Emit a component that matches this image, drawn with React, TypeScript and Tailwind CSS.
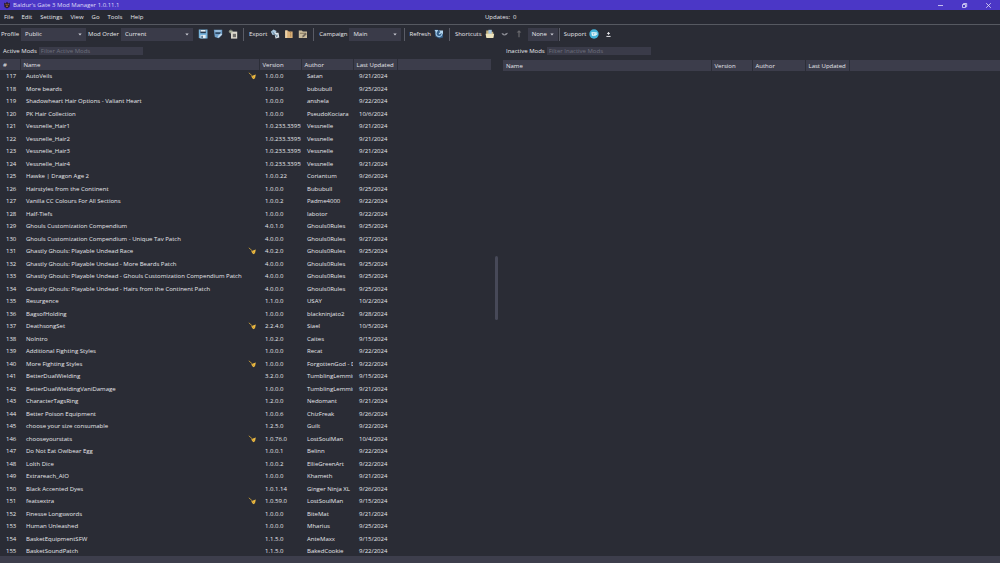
import type { ReactNode } from "react"

type Mod = {
  name:    string
  version: string
  author:  string
  updated: string
  script?: boolean
}

const FIRST_INDEX = 117

const MODS: Mod[] = [
  { name: "AutoVeils", version: "1.0.0.0", author: "Satan", updated: "9/21/2024", script: true },
  { name: "More beards", version: "1.0.0.0", author: "bububull", updated: "9/25/2024" },
  { name: "Shadowheart Hair Options - Valiant Heart", version: "1.0.0.0", author: "anshela", updated: "9/22/2024" },
  { name: "PK Hair Collection", version: "1.0.0.0", author: "PseudoKociara", updated: "10/6/2024" },
  { name: "Vessnelle_Hair1", version: "1.0.233.33959", author: "Vessnelle", updated: "9/21/2024" },
  { name: "Vessnelle_Hair2", version: "1.0.233.33959", author: "Vessnelle", updated: "9/21/2024" },
  { name: "Vessnelle_Hair3", version: "1.0.233.33959", author: "Vessnelle", updated: "9/21/2024" },
  { name: "Vessnelle_Hair4", version: "1.0.233.33959", author: "Vessnelle", updated: "9/21/2024" },
  { name: "Hawke | Dragon Age 2", version: "1.0.0.22", author: "Coriantum", updated: "9/26/2024" },
  { name: "Hairstyles from the Continent", version: "1.0.0.0", author: "Bububull", updated: "9/25/2024" },
  { name: "Vanilla CC Colours For All Sections", version: "1.0.0.2", author: "Padme4000", updated: "9/22/2024" },
  { name: "Half-Tiefs", version: "1.0.0.0", author: "labotor", updated: "9/22/2024" },
  { name: "Ghouls Customization Compendium", version: "4.0.1.0", author: "Ghouls0Rules", updated: "9/25/2024" },
  { name: "Ghouls Customization Compendium - Unique Tav Patch", version: "4.0.0.0", author: "Ghouls0Rules", updated: "9/27/2024" },
  { name: "Ghastly Ghouls: Playable Undead Race", version: "4.0.2.0", author: "Ghouls0Rules", updated: "9/25/2024", script: true },
  { name: "Ghastly Ghouls: Playable Undead - More Beards Patch", version: "4.0.0.0", author: "Ghouls0Rules", updated: "9/25/2024" },
  { name: "Ghastly Ghouls: Playable Undead - Ghouls Customization Compendium Patch", version: "4.0.0.0", author: "Ghouls0Rules", updated: "9/25/2024" },
  { name: "Ghastly Ghouls: Playable Undead - Hairs from the Continent Patch", version: "4.0.0.0", author: "Ghouls0Rules", updated: "9/25/2024" },
  { name: "Resurgence", version: "1.1.0.0", author: "USAY", updated: "10/2/2024" },
  { name: "BagsofHolding", version: "1.0.0.0", author: "blackninjato2", updated: "9/28/2024" },
  { name: "DeathsongSet", version: "2.2.4.0", author: "Siael", updated: "10/5/2024", script: true },
  { name: "NoIntro", version: "1.0.2.0", author: "Caites", updated: "9/15/2024" },
  { name: "Additional Fighting Styles", version: "1.0.0.0", author: "Recat", updated: "9/22/2024" },
  { name: "More Fighting Styles", version: "1.0.0.0", author: "ForgottenGod - D", updated: "9/22/2024", script: true },
  { name: "BetterDualWielding", version: "3.2.0.0", author: "TumblingLemmin", updated: "9/15/2024" },
  { name: "BetterDualWieldingVaniDamage", version: "1.0.0.0", author: "TumblingLemmin", updated: "9/21/2024" },
  { name: "CharacterTagsRing", version: "1.2.0.0", author: "Nedomant", updated: "9/21/2024" },
  { name: "Better Poison Equipment", version: "1.0.0.6", author: "ChizFreak", updated: "9/26/2024" },
  { name: "choose your size consumable", version: "1.2.5.0", author: "Guilt", updated: "9/22/2024" },
  { name: "chooseyourstats", version: "1.0.76.0", author: "LostSoulMan", updated: "10/4/2024", script: true },
  { name: "Do Not Eat Owlbear Egg", version: "1.0.0.1", author: "Belinn", updated: "9/22/2024" },
  { name: "Lolth Dice", version: "1.0.0.2", author: "EllieGreenArt", updated: "9/22/2024" },
  { name: "Extrareach_AIO", version: "1.0.0.0", author: "Khameth", updated: "9/21/2024" },
  { name: "Black Accented Dyes", version: "1.0.1.14", author: "Ginger Ninja XL", updated: "9/26/2024" },
  { name: "featsextra", version: "1.0.59.0", author: "LostSoulMan", updated: "9/15/2024", script: true },
  { name: "Finesse Longswords", version: "1.0.0.0", author: "BiteMat", updated: "9/21/2024" },
  { name: "Human Unleashed", version: "1.0.0.0", author: "Mharius", updated: "9/25/2024" },
  { name: "BasketEquipmentSFW", version: "1.1.5.0", author: "AnteMaxx", updated: "9/15/2024" },
  { name: "BasketSoundPatch", version: "1.1.5.0", author: "BakedCookie", updated: "9/22/2024" },
]

const MENUS = ["File", "Edit", "Settings", "View", "Go", "Tools", "Help"]

export default function App() {
  return (
    <div className="flex h-screen flex-col overflow-hidden bg-[#2a2c35] font-['Open_Sans',sans-serif] text-[6px] leading-[8px] text-[#e6e7eb]">
      <TitleBar />
      <MenuBar />
      <Toolbar />

      <main className="flex min-h-0 flex-1">
        {/* Active mods */}
        <section className="flex w-[49.5%] flex-col overflow-hidden pr-1">
          <Filter id="filter-active" label="Active Mods" placeholder="Filter Active Mods" />
          <div className="mt-1 min-h-0 flex-1 overflow-hidden">
            <ActiveTable />
          </div>
        </section>

        {/* Splitter */}
        <div className="flex w-2 items-center pb-6">
          <div className="h-16 w-[3px] rounded-full bg-[#474958]" />
        </div>

        {/* Inactive mods */}
        <section className="min-w-0 flex-1">
          <Filter id="filter-inactive" label="Inactive Mods" placeholder="Filter Inactive Mods" />
          <table className="mt-[5px] w-full table-fixed border-collapse">
            <colgroup>
              <col className="w-[208px]" />
              <col className="w-[41px]" />
              <col className="w-[53px]" />
              <col className="w-[44px]" />
              <col />
            </colgroup>
            <thead>
              <tr className="h-[11px]">
                <Th>Name</Th>
                <Th>Version</Th>
                <Th>Author</Th>
                <Th>Last Updated</Th>
                <Th last />
              </tr>
            </thead>
          </table>
        </section>
      </main>

      <footer className="h-[7px] shrink-0 bg-[#3d3e4c]" />
    </div>
  )
}

// ─── Window chrome ────────────────────────────────────────────────────────────

function TitleBar() {
  return (
    <header className="flex h-[10px] shrink-0 items-center bg-[#4b37c6] pl-[3px] text-[#dedaf8]">
      <svg viewBox="0 0 8 8" className="mr-[2px] size-2">
        <path d="M1 1.5 2.5 2.5 4 .8 5.5 2.5 7 1.5 6.6 6 4 7.6 1.4 6Z" fill="#2a1d2e" />
        <path d="M2.6 3.4h1M4.6 3.4h1M3 5.2h2" stroke="#d0803c" strokeWidth=".9" />
      </svg>
      <h1>Baldur's Gate 3 Mod Manager 1.0.11.1</h1>
      <div className="ml-auto flex h-full">
        <WindowButton label="Minimize"><path d="M1 3.5h5" /></WindowButton>
        <WindowButton label="Restore"><path d="M1.5 2.5h3v3h-3zM2.5 2.5v-1h3.2v3.2H4.5" /></WindowButton>
        <WindowButton label="Close"><path d="m1.2 1.2 4.6 4.6M5.8 1.2 1.2 5.8" /></WindowButton>
      </div>
    </header>
  )
}

function WindowButton({ label, children }: { label: string; children: ReactNode }) {
  return (
    <button type="button" aria-label={label} className="flex w-6 items-center justify-center">
      <svg viewBox="0 0 7 7" className="size-[7px]" fill="none" stroke="#e2dffa" strokeWidth=".8">
        {children}
      </svg>
    </button>
  )
}

function MenuBar() {
  return (
    <nav className="flex h-[15px] shrink-0 items-center border-b border-[#565961] bg-[#272932] pl-1">
      <div className="flex w-[481px] gap-2">
        {MENUS.map((menu) => (
          <button key={menu} type="button">{menu}</button>
        ))}
      </div>
      <span className="whitespace-pre">Updates:  0</span>
    </nav>
  )
}

// ─── Toolbar ──────────────────────────────────────────────────────────────────

function Toolbar() {
  return (
    <div className="flex h-[18px] shrink-0 items-center pl-px">
      <Picker id="profile" label="Profile" value="Public" width="w-[65px]" />
      <span className="w-[2px]" />
      <Picker id="order" label="Mod Order" value="Current" width="w-[72px]" />
      <div className="ml-[5px] flex gap-[5px]">
        <Tool label="Save"><SaveArt /></Tool>
        <Tool label="Save as"><SaveAsArt /></Tool>
        <Tool label="New order"><NewArt /></Tool>
      </div>
      <Divider />

      <span>Export</span>
      <div className="ml-[3px] flex gap-1">
        <Tool label="Export to game"><ExportArt /></Tool>
        <Tool label="Export to archive"><ArchiveArt /></Tool>
        <Tool label="Export to archive as"><ArchiveAsArt /></Tool>
      </div>
      <Divider />

      <Picker id="campaign" label="Campaign" value="Main" width="w-[52px]" />
      <span className="w-[2px]" />
      <Divider tight />

      <span className="mr-[3px]">Refresh</span>
      <Tool label="Refresh"><RefreshArt /></Tool>
      <Divider />

      <span className="mr-[3px]">Shortcuts</span>
      <div className="flex gap-[5px]">
        <Tool label="Open mods folder"><FolderArt /></Tool>
        <Tool label="Open workshop"><WingArt /></Tool>
        <Tool label="Launch game"><SwordArt /></Tool>
      </div>
      <button type="button" className="ml-[3px] flex h-[13px] items-center gap-[3px] bg-[#3a3b49] px-1">
        None
        <Caret />
      </button>
      <Divider tight />

      <span className="mr-[3px]">Support</span>
      <div className="flex gap-1">
        <Tool label="Donate"><DonateArt /></Tool>
        <Tool label="Repository"><RepoArt /></Tool>
      </div>
    </div>
  )
}

function Picker({ id, label, value, width }: { id: string; label: string; value: string; width: string }) {
  return (
    <>
      <label htmlFor={id} className="mr-[2px]">{label}</label>
      <div className={`relative h-[13px] ${width}`}>
        <select id={id} className="block size-full appearance-none bg-[#3a3b49] pl-1">
          <option>{value}</option>
        </select>
        <span className="pointer-events-none absolute inset-y-0 right-1 flex items-center">
          <Caret />
        </span>
      </div>
    </>
  )
}

function Caret() {
  return (
    <svg viewBox="0 0 4 3" className="h-[3px] w-1" fill="#c9cad2">
      <path d="M.3.5h3.4L2 2.5Z" />
    </svg>
  )
}

function Divider({ tight = false }: { tight?: boolean }) {
  return <span className={`h-[13px] w-px bg-[#5a5c66] ${tight ? "mr-1 ml-px" : "mx-[5px]"}`} />
}

function Tool({ label, children }: { label: string; children: ReactNode }) {
  return (
    <button type="button" aria-label={label} className="flex">
      <svg viewBox="0 0 10 10" className="size-[10px]" fill="none">{children}</svg>
    </button>
  )
}

function SaveArt() {
  return (
    <>
      <path d="M.8.5h8.7v9H1.9L.8 8.2Z" fill="#78b4dc" />
      <path d="M2.4.8h5.4v3.4H2.4z" fill="#25384d" />
      <path d="M2.6 1h5v1.6h-5z" fill="#e6f0f6" />
      <path d="M2.6 6h5v3.2h-5z" fill="#e6eef3" />
      <path d="M3.4 6.8h1.4v2.2H3.4z" fill="#3a6284" />
    </>
  )
}

function SaveAsArt() {
  return (
    <>
      <path d="M.8.8h8.4v5L5.6 9.2 1.8 8Z" fill="#6f9fc9" />
      <path d="M2.2 1.6h5.6v.8H2.2z" fill="#cfe0ec" />
      <path d="M2.4 3.4h5.2v1.4H2.4z" fill="#20344b" />
      <path d="m4.6 8.8.4-1.9 2.8-2.7 1.3 1.3-2.8 2.8Z" fill="#c3d9ea" />
    </>
  )
}

function NewArt() {
  return (
    <>
      <path d="M3 2.6h6.2v7H3z" fill="#dcd9cd" />
      <path d="M4.8 4.8H8v3.4H4.8z" fill="#6f6e6a" />
      <path d="M2.8.6v4M.8 2.6h4M1.4 1.2l2.8 2.8M4.2 1.2 1.4 4" stroke="#b5bda5" strokeWidth=".8" />
    </>
  )
}

function ExportArt() {
  return (
    <>
      <path d="M.8 2.8 3.5.6l3 1.3-1 3.3L2.6 6Z" fill="#a9c6dc" />
      <path d="M4.2 3.8h4.3l.8 4.8-3.7.8Z" fill="#dfe6ea" />
      <path d="m2.6 3.2 3.8 3.6M7 5.6l-.2 2.6" stroke="#4c6f8d" />
    </>
  )
}

function ArchiveArt() {
  return (
    <>
      <path d="M1.2 1.4h2.6l1 1h3.8v6.6H1.2z" fill="#d9b078" />
      <path d="M1.2 1.4h2v7.6h-2z" fill="#ead2ab" />
      <path d="M6.6 2.8v4.8" stroke="#a27b4c" strokeDasharray="1 .8" />
    </>
  )
}

function ArchiveAsArt() {
  return (
    <>
      <path d="M.8 1.4h3l1 1h4.2v6.6H.8z" fill="#c9bb9c" />
      <path d="M2 3.8h5.6v.9H2z" fill="#7d7058" />
      <path d="m4.2 8.4.4-1.8 3-2.8 1.3 1.3-3 2.8Z" fill="#72695d" />
    </>
  )
}

function RefreshArt() {
  return (
    <>
      <path d="M.6.8h3L9 3v5.6L5.4 9.6 1.4 7.6Z" fill="#355e86" />
      <path d="M2.2 3.2c-.6 2.6.8 4.4 2.9 4.4 1.9 0 3-1.4 2.7-3.3" stroke="#9fc6e4" strokeWidth="1.1" />
      <path d="M.6.9h3.6L2.4 3.9Z" fill="#b3d5ee" />
      <path d="M5 1.6h4v3.6L7.6 4 5.6 5.6 4.6 4.6 6.3 3Z" fill="#b3d5ee" />
    </>
  )
}

function FolderArt() {
  return (
    <>
      <path d="M1.2 1.6h3.2l.8 1.2h3v5h-7z" fill="#c5b27e" />
      <path d="M3.4.8h3.4v4H3.4z" fill="#a7c7e0" />
      <path d="M.6 4.8h8.6L8.4 9H1.4z" fill="#ece3bd" />
    </>
  )
}

function WingArt() {
  return <path d="M1.5 4.2c1.4-.2 2.2.3 3 1.3C5.4 4.3 6.4 3.8 8 3.7 7.4 5.2 6.2 6.4 4.4 6.5 2.8 6.1 2 5.4 1.5 4.2Z" fill="#8f9098" />
}

function SwordArt() {
  return <path d="M4 1.2 6.4 3.4H4.6v4.8h-1.2V3.4H1.6Z" fill="#69696d" />
}

function DonateArt() {
  return (
    <>
      <circle cx="5" cy="5" r="4.7" fill="#45b2d8" />
      <path d="M2.4 3.2h4.4v3.6H2.9z" fill="#f2fafc" />
      <path d="M6.8 3.8h1.1v1.7H6.7" stroke="#f2fafc" strokeWidth=".8" />
      <path d="m4.6 6-1-1a.6.6 0 0 1 1-.7.6.6 0 0 1 1 .7Z" fill="#7cc4dc" />
    </>
  )
}

function RepoArt() {
  return (
    <>
      <path d="M5.5 3v2.8M4 4.4h3" stroke="#e6e6ea" strokeWidth=".9" />
      <path d="M3.4 7.4h4.2" stroke="#e6e6ea" />
    </>
  )
}

// ─── Mod lists ────────────────────────────────────────────────────────────────

function Filter({ id, label, placeholder }: { id: string; label: string; placeholder: string }) {
  return (
    <div className="mt-1 flex h-[8px] items-center pl-[3px]">
      <label htmlFor={id} className="mr-[2px]">{label}</label>
      <input
        id={id}
        placeholder={placeholder}
        className="h-[8px] w-[104px] bg-[#3a3b49] px-[2px] placeholder:text-[#6e707d]"
      />
    </div>
  )
}

function Th({ children, last = false }: { children?: ReactNode; last?: boolean }) {
  return (
    <th className={`overflow-hidden bg-[#3c3d4b] p-0 pl-[3px] text-left font-normal whitespace-nowrap ${
      last ? "" : "border-r border-[#2c2e38]"
    }`}>
      {children}
    </th>
  )
}

function ActiveTable() {
  return (
    <table className="w-full table-fixed border-collapse">
      <colgroup>
        <col className="w-[20px]" />
        <col className="w-[239px]" />
        <col className="w-[42px]" />
        <col className="w-[52px]" />
        <col className="w-[44px]" />
        <col />
      </colgroup>
      <thead>
        <tr className="h-[11px]">
          <Th>#</Th>
          <Th>Name</Th>
          <Th>Version</Th>
          <Th>Author</Th>
          <Th>Last Updated</Th>
          <Th last />
        </tr>
      </thead>
      <tbody>
        {MODS.map((mod, i) => (
          <tr key={mod.name} className="odd:h-[12px] even:h-[13px]">
            <Td>{FIRST_INDEX + i}</Td>
            <Td>
              <div className="flex items-center justify-between pr-[3px]">
                {mod.name}
                {mod.script && <Broom />}
              </div>
            </Td>
            <Td>{mod.version}</Td>
            <Td>{mod.author}</Td>
            <Td>{mod.updated}</Td>
            <td />
          </tr>
        ))}
      </tbody>
    </table>
  )
}

function Td({ children }: { children: ReactNode }) {
  return <td className="overflow-hidden p-0 pl-[6px] whitespace-nowrap">{children}</td>
}

function Broom() {
  return (
    <svg viewBox="0 0 8 8" className="size-2" fill="none">
      <path d="M.8.8 4 3.6" stroke="#c49a3a" strokeWidth=".9" />
      <path d="M3.2 4.4 5 3.4 7.8 2.4 7 6.2 5.2 7.2Z" fill="#edbb42" />
      <path d="m4.4 4.2 1.8 1.8" stroke="#a9761f" strokeWidth=".5" />
    </svg>
  )
}
